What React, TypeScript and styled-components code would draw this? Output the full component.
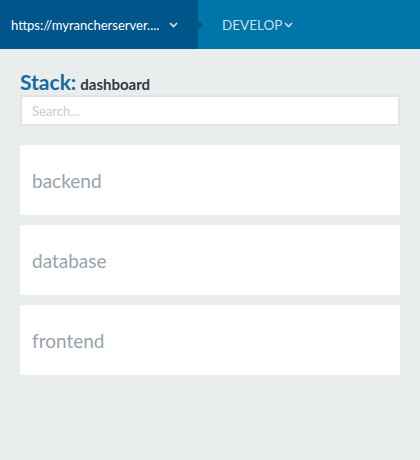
import React from "react";
import styled, { createGlobalStyle } from "styled-components";

const Global = createGlobalStyle`
  html, body { margin: 0; padding: 0; background: #e9edee; }
  body { font-family: Lato, "Open Sans", sans-serif; width: 420px; height: 460px; overflow: hidden; }
  * { box-sizing: border-box; }
`;

const Header = styled.header`
  display: flex;
  height: 49px;
  background: #0075a8;
`;

const EnvSwitch = styled.div`
  position: relative;
  display: flex;
  align-items: center;
  width: 198px;
  padding-left: 11px;
  background: #00558a;
  color: #ffffff;
  font-size: 13px;
  &::after {
    content: "";
    position: absolute;
    right: -5px;
    top: 20px;
    border-top: 5px solid transparent;
    border-bottom: 5px solid transparent;
    border-left: 5px solid #00558a;
  }
`;

const EnvText = styled.span`
  width: 150px;
  white-space: nowrap;
  overflow: hidden;
`;

const Chevron = styled.svg<{ $ml: number }>`
  margin-left: ${(p) => p.$ml}px;
  width: 9px;
  height: 6px;
`;

const NavItem = styled.div`
  display: flex;
  align-items: center;
  padding-left: 24px;
  color: #c8dfeb;
  font-size: 13.5px;
`;

const Main = styled.main`
  display: flex;
  flex-direction: column;
  padding: 20px 20px 0 20px;
`;

const Title = styled.h1`
  margin: 0;
  display: flex;
  align-items: baseline;
  gap: 4px;
  height: 25px;
  font-weight: 700;
`;

const TitleLabel = styled.span`
  color: #16699e;
  font-size: 21px;
`;

const TitleName = styled.span`
  color: #2c3a48;
  font-size: 15px;
`;

const Search = styled.input`
  display: block;
  width: 380px;
  height: 31px;
  margin-top: 1px;
  padding: 0 10px;
  border: 2px solid #e2e5e7;
  background: #fff;
  font-family: Lato, sans-serif;
  font-size: 13px;
  outline: none;
  &::placeholder { color: #c8cdd2; }
`;

const List = styled.div`
  display: flex;
  flex-direction: column;
  gap: 10px;
  margin-top: 19px;
`;

const Card = styled.div`
  display: flex;
  align-items: center;
  height: 70px;
  padding-left: 12px;
  background: #fff;
  color: #98a3ad;
  font-size: 19px;
`;

const ChevronIcon = ({ ml, color }: { ml: number; color: string }) => (
  <Chevron $ml={ml} viewBox="0 0 9 6">
    <path d="M1 1 L4.5 4.5 L8 1" fill="none" stroke={color} strokeWidth="1.6" />
  </Chevron>
);

export default function App() {
  return (
    <>
      <Global />
      <Header>
        <EnvSwitch>
          <EnvText>https://myrancherserver....</EnvText>
          <ChevronIcon ml={8} color="#d6e4ee" />
        </EnvSwitch>
        <NavItem>
          DEVELOP
          <ChevronIcon ml={2} color="#c8dfeb" />
        </NavItem>
      </Header>
      <Main>
        <Title>
          <TitleLabel>Stack:</TitleLabel>
          <TitleName>dashboard</TitleName>
        </Title>
        <Search placeholder="Search..." />
        <List>
          {["backend", "database", "frontend"].map((n) => (
            <Card key={n}>{n}</Card>
          ))}
        </List>
      </Main>
    </>
  );
}
